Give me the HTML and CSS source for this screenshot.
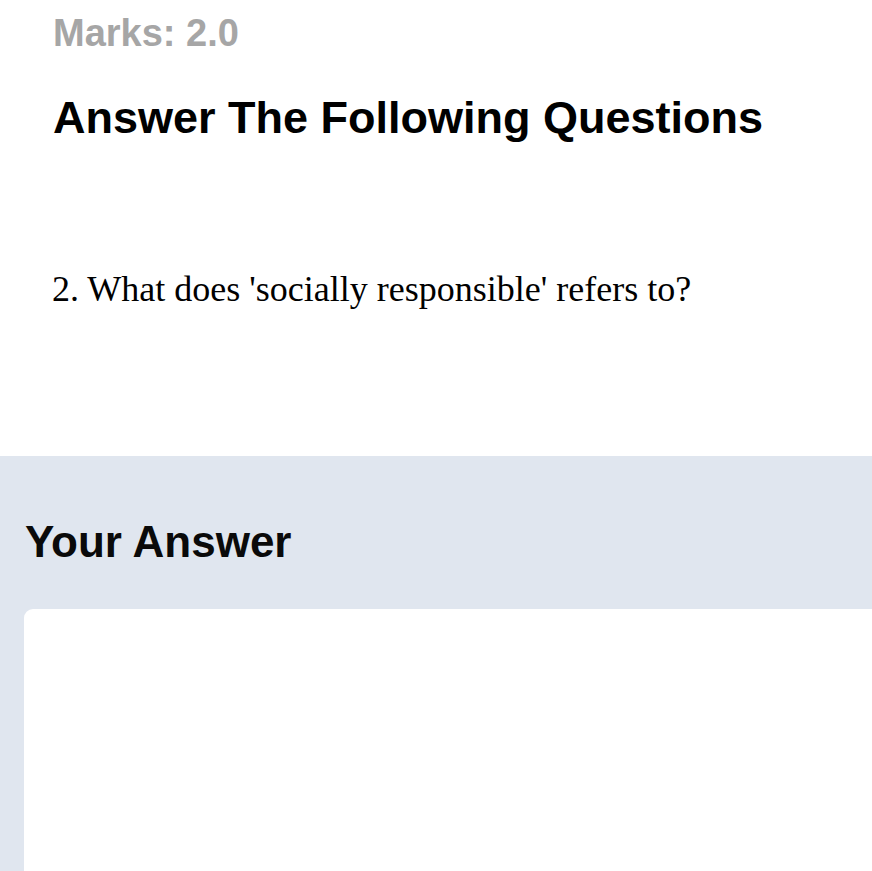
FILE: index.html
```html
<!DOCTYPE html>
<html lang="en">
<head>
<meta charset="utf-8">
<title>Answer The Following Questions</title>
<link rel="stylesheet" href="styles.css">
</head>
<body>
<main class="page">
  <header class="q-head">
    <p class="marks">Marks: 2.0</p>
    <h1 class="title">Answer The Following Questions</h1>
  </header>
  <p class="question">2. What does 'socially responsible' refers to?</p>
  <section class="answer">
    <h2 class="answer-title">Your Answer</h2>
    <div class="answer-box"></div>
  </section>
</main>
</body>
</html>
```
FILE: styles.css
```css
html, body {
  margin: 0;
  padding: 0;
  overflow: hidden;
  background: #ffffff;
}

.page {
  font-family: "Liberation Sans", Arial, sans-serif;
  color: #000;
}

.q-head {
  padding: 11px 53px 0;
}

.marks {
  margin: 0;
  font-size: 38px;
  line-height: 1.2;
  font-weight: 700;
  color: #a6a6a6;
}

.title {
  margin: 34px 0 0;
  font-size: 45px;
  line-height: 1.2;
  font-weight: 700;
  color: #000;
}

.question {
  margin: 123px 0 0;
  padding: 0 52px;
  font-family: "Liberation Serif", "Times New Roman", serif;
  font-size: 36px;
  line-height: 1.2;
}

.answer {
  margin-top: 145px;
  background: #e0e6ef;
  padding: 60px 0 0 24px;
  overflow: hidden;
}

.answer-title {
  margin: 0 0 40px 1px;
  font-size: 44px;
  line-height: 1.2;
  font-weight: 700;
  color: #0a0a0a;
}

.answer-box {
  margin-right: -20px;
  height: 320px;
  background: #ffffff;
  border-radius: 9px 0 0 0;
}
```
